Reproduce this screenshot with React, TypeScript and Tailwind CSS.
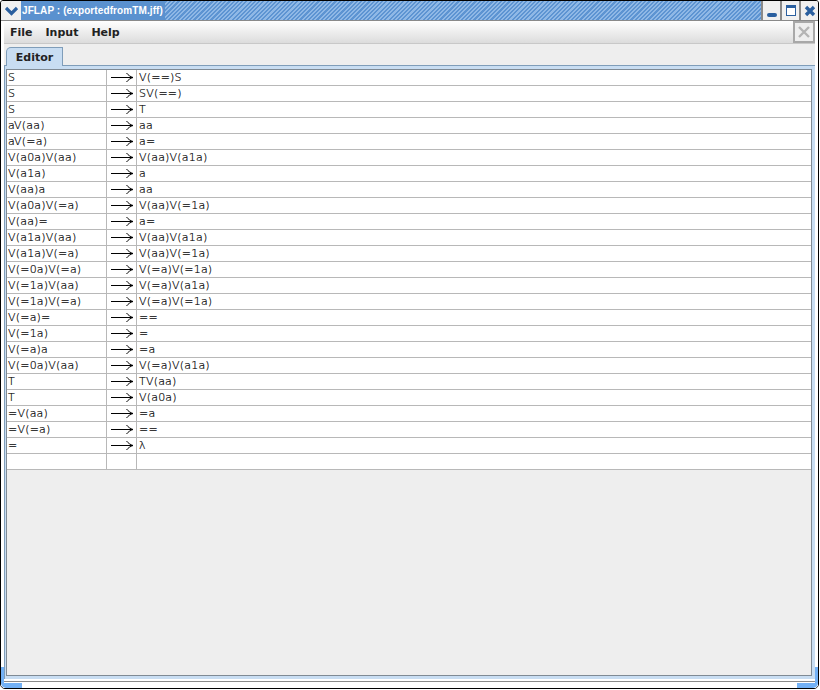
const rows: [string, string][] = [
  ["S", "V(==)S"], ["S", "SV(==)"], ["S", "T"], ["aV(aa)", "aa"], ["aV(=a)", "a="],
  ["V(a0a)V(aa)", "V(aa)V(a1a)"], ["V(a1a)", "a"], ["V(aa)a", "aa"], ["V(a0a)V(=a)", "V(aa)V(=1a)"],
  ["V(aa)=", "a="], ["V(a1a)V(aa)", "V(aa)V(a1a)"], ["V(a1a)V(=a)", "V(aa)V(=1a)"],
  ["V(=0a)V(=a)", "V(=a)V(=1a)"], ["V(=1a)V(aa)", "V(=a)V(a1a)"], ["V(=1a)V(=a)", "V(=a)V(=1a)"],
  ["V(=a)=", "=="], ["V(=1a)", "="], ["V(=a)a", "=a"], ["V(=0a)V(aa)", "V(=a)V(a1a)"],
  ["T", "TV(aa)"], ["T", "V(a0a)"], ["=V(aa)", "=a"], ["=V(=a)", "=="], ["=", "λ"], ["", ""],
];

function Arrow() {
  return (
    <svg width="23" height="11" viewBox="0 0 23 11" fill="none" stroke="#000" strokeWidth="1">
      <path d="M0 5.5H21.5" shapeRendering="crispEdges" />
      <path d="M15.5 1C17 3 19.5 4.8 22 5.5C19.5 6.2 17 8 15.5 10" />
    </svg>
  );
}

export default function App() {
  return (
    <div className="relative w-[819px] h-[689px] overflow-hidden bg-white flex flex-col border border-black rounded-b-[5px] rounded-t-[3px] font-['DejaVu_Sans',sans-serif]">
      <div className="flex h-[20px] shrink-0 border-b border-[#8a8a8a]">
        <div className="w-[20px] flex items-center justify-center bg-[#f0f0f0]">
          <svg width="13" height="10" viewBox="0 0 13 10"><path d="M1 2l5.5 5.5l5.5-5.5" fill="none" stroke="#2a5f9f" strokeWidth="3.2" /></svg>
        </div>
        <div className="flex-1 flex items-center text-white text-[10px] font-bold leading-none tracking-[0.1px] font-['Liberation_Sans',sans-serif] bg-[repeating-linear-gradient(135deg,#5d94d2_0px,#5d94d2_1.5px,#8fb8e6_1.5px,#8fb8e6_3px)]">
          <span className="bg-[#5a91cf] pl-px pr-[2px] h-full flex items-center">JFLAP : (exportedfromTM.jff)</span>
        </div>
        <div className="flex bg-[#f0f0f0]">
          <div className="w-[19px] flex items-center justify-center border-l-2 border-[#8a8a8a]">
            <div className="w-[10px] h-[4px] mt-[8px] rounded-[2px] bg-[#2a5f9f]" />
          </div>
          <div className="w-[19px] flex items-center justify-center border-l-2 border-[#8a8a8a]">
            <div className="w-[10px] h-[11px] border border-[#2a5f9f] border-t-[3px] bg-white" />
          </div>
          <div className="w-[19px] flex items-center justify-center border-l-2 border-[#8a8a8a]">
            <svg width="12" height="12" viewBox="0 0 12 12"><path d="M2 2l8 8M10 2l-8 8" stroke="#2a5f9f" strokeWidth="3.4" /></svg>
          </div>
        </div>
      </div>

      <div className="flex-1 flex flex-col px-[3px] min-h-0">
        <div className="flex-1 flex flex-col bg-[#eeeeee] min-h-0">
          <div className="h-[23px] shrink-0 flex items-start justify-between bg-[linear-gradient(#ffffff,#dcdcdc)] border-b border-[#c8c8c8]">
            <div className="flex gap-[13px] pl-[6px] pt-[5px] text-[11px] leading-[13px] font-bold text-[#222222]">
              <span>File</span><span>Input</span><span>Help</span>
            </div>
            <div className="w-[22px] h-[22px] border-2 border-[#a8a8a8] flex items-center justify-center bg-[#eeeeee]">
              <svg width="12" height="12" viewBox="0 0 12 12"><path d="M1 1l10 10M11 1l-10 10" stroke="#b4b4b4" strokeWidth="2.4" /></svg>
            </div>
          </div>

          <div className="flex-1 flex flex-col pt-[3px] min-h-0">
            <div className="h-[18px] shrink-0 flex pl-[2px]">
              <div className="relative w-[57px] h-[19px] rounded-tl-[5px] border border-b-0 border-[#7f9db9] bg-[#c8ddf2] flex items-center justify-center text-[11px] leading-none font-bold text-[#222222]">Editor</div>
            </div>
            <div className="flex-1 border-t border-l border-[#7f9db9] min-h-0 flex flex-col">
              <div className="flex-1 pt-[3px] pl-px pr-[3px] pb-[3px] bg-[#c8ddf2] flex flex-col min-h-0">
                <div className="flex-1 border border-[#7f8a94] bg-[#eeeeee] min-h-0">
                  <div className="bg-white text-[11px] font-light leading-none tracking-[0.2px] text-black [-webkit-text-stroke:0.2px_#000000]">
                    {rows.map(([l, r], i) => (
                      <div key={i} className="flex h-[16px] border-b border-[#b8b8b8]">
                        <div className="w-[100px] pl-[1px] border-r border-[#b8b8b8] flex items-center">{l}</div>
                        <div className="w-[30px] pl-[4px] border-r border-[#b8b8b8] flex items-center">{l && <Arrow />}</div>
                        <div className="flex-1 pl-[2px] flex items-center">{r}</div>
                      </div>
                    ))}
                  </div>
                </div>
              </div>
            </div>
          </div>
        </div>
      </div>

      <div className="h-[7px] mt-[2px] shrink-0 border-t border-[#8a8a8a] bg-white" />

      <div className="absolute left-0 bottom-0 w-[21px] h-[21px] border-l-[3px] border-b-[5px] border-[#73b1f5] rounded-bl-[5px]" />
      <div className="absolute right-0 bottom-0 w-[21px] h-[21px] border-r-[3px] border-b-[5px] border-[#73b1f5] rounded-br-[5px]" />
    </div>
  );
}
